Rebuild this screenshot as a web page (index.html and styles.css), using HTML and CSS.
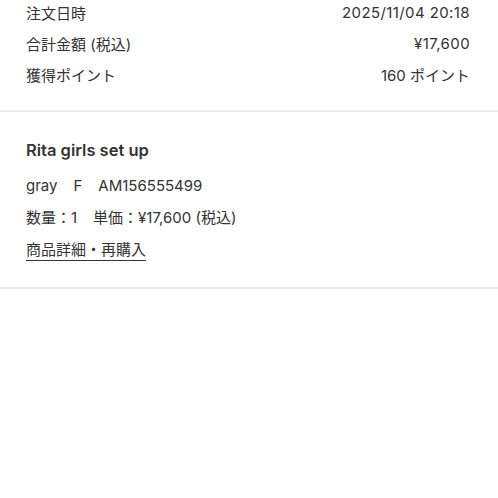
FILE: index.html
```html
<!DOCTYPE html>
<html lang="ja">
<head>
  <meta charset="UTF-8">
  <meta name="viewport" content="width=device-width, initial-scale=1.0">
  <title>注文詳細</title>
  <link rel="stylesheet" href="styles.css">
</head>
<body>
  <!-- order summary -->
  <div class="summary">
    <div class="summary-row"><span>注文日時</span><span class="num">2025/11/04 20:18</span></div>
    <div class="summary-row"><span>合計金額 (税込)</span><span class="num">¥17,600</span></div>
    <div class="summary-row"><span>獲得ポイント</span><span>160 ポイント</span></div>
  </div>

  <!-- item -->
  <div class="item">
    <div class="item-name">Rita girls set up</div>
    <div class="item-spec">
      <span>gray</span><span>F</span><span>AM156555499</span>
    </div>
    <div class="item-price">
      <span>数量：1</span><span>単価：¥17,600 (税込)</span>
    </div>
    <a class="item-link" href="#">商品詳細・再購入</a>
  </div>
</body>
</html>
```

FILE: styles.css
```css
body {
  margin: 0;
  background-color: #fff;
  font-family: Inter, "Noto Sans CJK JP", sans-serif;
  color: #333;
  font-size: 15px;
}

.summary {
  display: flex;
  flex-direction: column;
  gap: 7px;
  padding: 0 28px 24px 26px;
  border-bottom: 2px solid #ececec;
}

.summary-row {
  display: flex;
  justify-content: space-between;
  align-items: center;
  height: 24px;
}

.num {
  letter-spacing: 0.4px;
}

.item {
  display: flex;
  flex-direction: column;
  align-items: flex-start;
  padding: 27px 26px 26px;
  border-bottom: 2px solid #ececec;
}

.item-name {
  font-size: 16.5px;
  font-weight: 600;
  line-height: 22px;
  margin-bottom: 14px;
}

.item-spec {
  display: flex;
  gap: 16px;
  line-height: 22px;
  margin-bottom: 10px;
}

.item-price {
  display: flex;
  gap: 16px;
  line-height: 22px;
  margin-bottom: 11px;
}

.item-link {
  color: #333;
  text-decoration: none;
  line-height: 20px;
  border-bottom: 1px solid #333;
}
```
